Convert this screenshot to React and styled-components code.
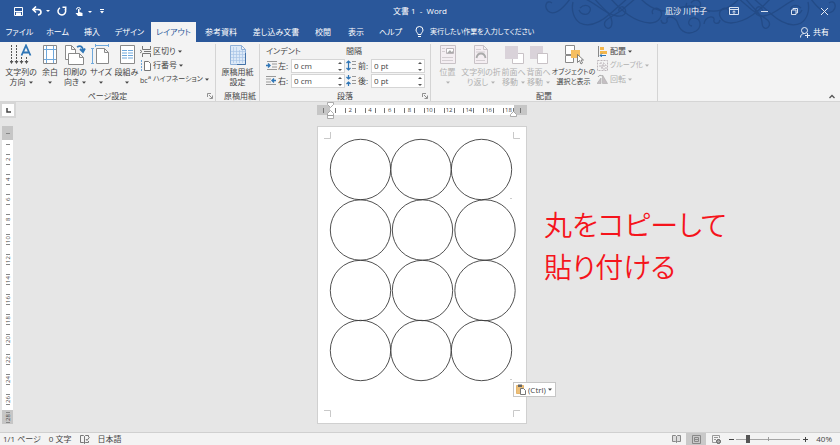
import React from "react";
import styled, { createGlobalStyle } from "styled-components";

const GlobalStyle = createGlobalStyle`
  * { box-sizing: border-box; }
  html, body { margin: 0; padding: 0; }
  body, button, input {
    font-family: "Open Sans", "Noto Sans CJK JP", sans-serif;
    font-size: 8px;
    line-height: 10px;
    font-feature-settings: "palt";
    color: #444;
  }
  button { border: 0; background: none; padding: 0; cursor: pointer; white-space: nowrap; }
`;

const Window = styled.div`
  display: flex;
  flex-direction: column;
  min-height: 100vh;
  background: #e6e6e6;
`;

/* ---------- header ---------- */
const Header = styled.header`
  position: relative;
  background: #2a579a;
  overflow: hidden;
`;
const Flourish = styled.svg`
  position: absolute;
  top: 0;
  right: 0;
  width: 300px;
  height: 42px;
  fill: none;
  stroke: #234b87;
  stroke-width: 1.3;
`;
const TitleBar = styled.div`
  position: relative;
  display: grid;
  grid-template-columns: 1fr auto 1fr;
  align-items: center;
  height: 22px;
`;
const QuickAccess = styled.div`
  display: flex;
  align-items: center;
  padding-left: 8px;
`;
const TitleButton = styled.button`
  display: flex;
  align-items: center;
  justify-content: center;
  width: ${(p) => p.$w}px;
  height: 20px;
  color: #fff;
`;
const Title = styled.h1`
  margin: 0;
  font-size: 8px;
  font-weight: 400;
  color: #fff;
  white-space: pre;
`;
const WindowControls = styled.div`
  display: flex;
  align-items: center;
  justify-content: flex-end;
  padding-right: 1px;
`;
const UserName = styled.span`
  color: #fff;
  margin-right: 12px;
`;
const TabBar = styled.nav`
  position: relative;
  display: flex;
  height: 20px;
`;
const Tab = styled.button`
  width: ${(p) => p.$w}px;
  height: 20px;
  color: ${(p) => (p.$active ? "#2a579a" : "#fff")};
  background: ${(p) => (p.$active ? "#f3f3f3" : "transparent")};
`;
const TellMe = styled.button`
  display: flex;
  align-items: center;
  gap: 6px;
  margin-left: 6px;
  font-size: 7px;
  color: #fff;
`;
const Share = styled.button`
  display: flex;
  align-items: center;
  gap: 3px;
  margin-left: auto;
  margin-right: 11px;
  color: #fff;
`;

/* ---------- ribbon ---------- */
const Ribbon = styled.section`
  display: flex;
  height: 60px;
  background: #f3f3f3;
  border-bottom: 1px solid #d5d5d5;
`;
const Group = styled.div`
  display: flex;
  flex: none;
  flex-direction: column;
  width: ${(p) => p.$w}px;
  margin-top: 2px;
  border-right: 1px solid #d4d4d4;
`;
const GroupBody = styled.div`
  display: flex;
  flex: 1;
  padding-left: ${(p) => p.$pad || 0}px;
`;
const GroupFooter = styled.div`
  display: grid;
  grid-template-columns: 8px 1fr 8px;
  align-items: center;
  height: 10px;
  text-align: center;
  white-space: nowrap;
`;
const Launcher = styled.button`
  display: flex;
  color: #777;
`;
const BigButton = styled.button`
  display: flex;
  flex: none;
  flex-direction: column;
  align-items: center;
  width: ${(p) => p.$w}px;
  height: 44px;
  font-size: ${(p) => (p.$compact ? 7 : 8)}px;
  color: ${(p) => (p.disabled ? "#b1b1b1" : "#444")};
`;
const BigIcon = styled.svg`
  width: 22px;
  height: 22px;
  flex: none;
  margin-bottom: 1px;
  fill: none;
  stroke: #8a8a8a;
`;
const ButtonLine = styled.span`
  display: flex;
  align-items: center;
  justify-content: center;
  gap: 3px;
  height: 10px;
`;
const SmallColumn = styled.div`
  display: flex;
  flex-direction: column;
  padding-left: 1px;
`;
const SmallButton = styled.button`
  display: flex;
  align-items: center;
  gap: 2px;
  height: 14px;
  font-size: ${(p) => (p.$compact ? 7 : 8)}px;
  color: ${(p) => (p.disabled ? "#b1b1b1" : "#444")};
`;
const SmallIcon = styled.svg`
  width: 11px;
  height: 11px;
  flex: none;
  fill: none;
  stroke: #777;
`;
const HyphenMark = styled.span`
  display: flex;
  align-items: flex-end;
  width: 11px;
  height: 11px;
  font-size: 7px;
  line-height: 8px;
`;
const Superscript = styled.span`
  align-self: flex-start;
  font-size: 6px;
  line-height: 6px;
`;
const Fields = styled.div`
  display: grid;
  grid-template-columns: 80px 80px;
  grid-template-rows: 14px 15px 15px;
  align-items: center;
`;
const Field = styled.label`
  display: grid;
  grid-template-columns: 12px 13px 54px;
  align-items: center;
  white-space: nowrap;
`;
const FieldBox = styled.span`
  display: flex;
  align-items: center;
  height: 14px;
  border: 1px solid #d5d5d5;
  background: #fff;
`;
const FieldInput = styled.input`
  flex: 1;
  min-width: 0;
  height: 12px;
  padding: 0 2px;
  border: 0;
  background: none;
  outline: 0;
`;
const Spinner = styled.svg`
  width: 8px;
  height: 12px;
  fill: #555;
`;
const CollapseButton = styled.button`
  align-self: flex-end;
  display: flex;
  margin: 0 5px 2px auto;
`;

/* ---------- workspace ---------- */
const Workspace = styled.main`
  flex: 1;
  display: grid;
  grid-template-columns: minmax(0, 317fr) 210px minmax(0, 313fr);
`;
const LeftPane = styled.div`
  display: flex;
  flex-direction: column;
  align-items: flex-start;
`;
const TabSelector = styled.button`
  display: flex;
  align-items: center;
  justify-content: center;
  width: 16px;
  height: 16px;
  margin-bottom: 8px;
  border: 2px solid #d6d6d6;
  background: #fdfdfd;
`;
const VerticalRuler = styled.div`
  display: flex;
  flex-direction: column;
  width: 11px;
  height: 298px;
  margin-left: 2px;
  background: #fff;
`;
const VerticalEnd = styled.div`
  display: flex;
  align-items: center;
  justify-content: center;
  height: 14px;
  background: #c6c6c6;
`;
const VerticalScale = styled.div`
  flex: 1;
  display: flex;
  flex-direction: column;
  justify-content: space-between;
  align-items: center;
  padding: 4px 0 5px;
`;
const VerticalTick = styled.span`
  width: 4px;
  height: 1px;
  background: #888;
`;
const VerticalMark = styled.span`
  display: flex;
  align-items: center;
  justify-content: center;
  width: 4px;
  height: 11px;
  border: solid #888;
  border-width: 1px 0;
  font-size: 6px;
  line-height: 6px;
  writing-mode: vertical-rl;
  transform: rotate(180deg);
`;
const DocumentPane = styled.div`
  display: flex;
  flex-direction: column;
`;
const RulerRow = styled.div`
  position: relative;
  display: flex;
  height: 10px;
  margin: 3px 0 11px;
  background: #fff;
`;
const RulerEnd = styled.div`
  display: flex;
  align-items: center;
  justify-content: center;
  width: 13px;
  background: #c6c6c6;
`;
const RulerScale = styled.div`
  flex: 1;
  display: flex;
  justify-content: space-between;
  align-items: center;
  padding-left: 5px;
`;
const RulerTick = styled.span`
  width: 1px;
  height: 5px;
  background: #777;
`;
const RulerMark = styled.span`
  display: flex;
  align-items: center;
  justify-content: center;
  width: 11px;
  height: 5px;
  border: solid #777;
  border-width: 0 1px;
  font-size: 6px;
  line-height: 6px;
`;
const IndentMarker = styled.svg`
  position: absolute;
  top: -3px;
  ${(p) => (p.$end ? "right: 10px;" : "left: 10px;")}
  width: 7px;
  height: 17px;
  fill: #fff;
  stroke: #999;
  stroke-width: 0.8;
`;
const Page = styled.article`
  position: relative;
  width: 210px;
  height: 298px;
  background: #fff;
  border: 1px solid #d0d0d0;
`;
const Drawing = styled.svg`
  display: block;
  width: 208px;
  height: 296px;
  fill: none;
`;
const PasteOptions = styled.button`
  position: absolute;
  left: 195px;
  top: 255px;
  display: flex;
  align-items: center;
  gap: 2px;
  width: 43px;
  height: 15px;
  padding-left: 2px;
  border: 1px solid #c6c6c6;
  background: #fff;
`;
const Annotation = styled.p`
  margin: 101px 0 0 17px;
  font-family: "Noto Sans CJK JP", sans-serif;
  font-size: 28px;
  font-weight: 350;
  line-height: 42px;
  color: #f5141c;
  white-space: nowrap;
`;

/* ---------- status bar ---------- */
const StatusBar = styled.footer`
  display: flex;
  align-items: center;
  height: 13px;
  padding: 0 8px 0 3px;
  background: #f3f3f3;
  border-top: 1px solid #d0d0d0;
`;
const StatusItem = styled.button`
  display: flex;
  align-items: center;
  margin-right: 8px;
`;
const ViewButton = styled.button`
  display: flex;
  align-items: center;
  justify-content: center;
  width: 20px;
  height: 12px;
  background: ${(p) => (p.$active ? "#c9c9c9" : "transparent")};
`;
const Push = styled.span`
  flex: 1;
`;
const ZoomStep = styled.button`
  display: flex;
  align-items: center;
  justify-content: center;
  width: 10px;
  height: 12px;
`;
const ZoomSlider = styled.input`
  appearance: none;
  width: 64px;
  height: 12px;
  margin: 0;
  background:
    linear-gradient(#999, #999) center / 1px 4px no-repeat,
    linear-gradient(#a6a6a6, #a6a6a6) center / 100% 1px no-repeat;
  &::-webkit-slider-thumb {
    appearance: none;
    width: 4px;
    height: 8px;
    background: #555;
  }
`;
const ZoomValue = styled.output`
  width: 22px;
  text-align: right;
`;

const Caret = () => (
  <svg width="4" height="3" viewBox="0 0 4 3" aria-hidden="true">
    <path d="M0 0.5h4L2 2.7z" fill="currentColor" />
  </svg>
);

const FlourishArt = () => (
  <Flourish viewBox="0 0 300 42" aria-hidden="true">
    <path d="M12 3C6-1 4 7 8 11c6 5 14-1 22-12M33 2c-2 9 1 17 7 21 10 5 21-1 31-10L88-2" />
    <path d="M40 8c5-5 12-2 10 3s-9 4-11-1M43-2c14 5 22 17 34 18 7 1 10-3 8-7s-7-2-6 2" />
    <path d="M54-2c9 12 17 14 18 24 0 7-5 8-7 4-3-6 7-9 17-16L96-2" />
    <path d="M70-2c12 13 24 24 40 25 9 0 14-8 10-13-4-4-10 0-7 4" />
    <path d="M121 20c1 5 7 4 6 0-1-5 9-4 11 4 3 9 11 11 18 7 6-4 5-12-1-13s-9 7-3 8M132 12c10-8 28-8 38 0M151 3c5-7 14 0 7 6-5 5-15-1-11-6M180 20c-1 5-7 4-6 0 1-5-9-4-10 4" />
    <path d="M289 3c6-4 8 4 4 8-6 5-14-1-22-12M268 2c2 9-1 17-7 21-10 5-21-1-31-10L213-2" />
    <path d="M261 8c-5-5-12-2-10 3s9 4 11-1M258-2c-14 5-22 17-34 18-7 1-10-3-8-7s7-2 6 2" />
    <path d="M205-2c9 12 16 14 17 24 0 7 5 8 7 4 3-6-7-9-17-16L198-2M231-2c-12 13-24 24-40 25-9 0-14-8-10-13 4-4 10 0 7 4" />
    <path d="M100-2c11 12 26 17 40 10M200-2c-11 12-26 17-40 10" />
  </Flourish>
);

const SheetPath = ({ x = 0, y = 0, w = 12, h = 15, stroke = "#8a8a8a", fill = "#fff" }) => (
  <path
    d={`M${x + 0.5} ${y + 0.5}h${w - 4}l4 4v${h - 4}h-${w}zM${x + w - 3.5} ${y + 0.5}v4h4`}
    fill={fill}
    stroke={stroke}
  />
);

const icons = {
  direction: (
    <>
      <path d="M1.5 1v17M6.5 1v17M11.5 13v5M16.5 13v5" stroke="#555" strokeDasharray="2 1" />
      <path d="M-0.5 17h4l-2 3zM4.5 17h4l-2 3zM9.5 17h4l-2 3zM14.5 17h4l-2 3z" fill="#555" stroke="none" />
      <path d="M11.5 11.5L16 1.5l4.5 10M13 8.5h6" stroke="#2e75b6" strokeWidth="1.8" />
    </>
  ),
  margins: (
    <>
      <path d="M4.5 1.5h13v18h-13z" fill="#fff" />
      <path d="M7.5 2v17M14.5 2v17M5 5.5h12M5 15.5h12" stroke="#6fa8dc" />
    </>
  ),
  orientation: (
    <>
      <SheetPath x={1} y={1} w={10} h={14} />
      <SheetPath x={4} y={9} w={15} h={11} />
      <path d="M13 3c4-2 6 0 6 4M16 5l3 3 2-3.5" stroke="#2e75b6" strokeWidth="1.8" />
    </>
  ),
  size: (
    <>
      <SheetPath x={6} y={4} w={12} h={15} />
      <path d="M5 1.5h14M5.5 0v3M18.5 0v3M2.5 4v16M1 4.5h3M1 19.5h3" stroke="#6fa8dc" />
    </>
  ),
  columns: (
    <>
      <path d="M4.5 1.5h14v18h-14z" fill="#fff" />
      <path d="M6 6.5h5M12 6.5h5M6 9h5M12 9h5M6 11.5h5M12 11.5h5M6 14h5M12 14h5" stroke="#6fa8dc" />
    </>
  ),
  manuscript: (
    <>
      <SheetPath x={3} y={1} w={15} h={19} stroke="#8fb0d8" fill="#dce9f7" />
      <path d="M6.5 3v16M9.5 3v16M12.5 6v13M15.5 6v13M4 7.5h14M4 10.5h14M4 13.500h14M4 16.500h14" stroke="#a9c5e6" strokeWidth="0.7" />
      <path d="M10 20.500h8.500V9" stroke="#4472a8" />
    </>
  ),
  position: (
    <>
      <path d="M3.5 1.5h15v18h-15z" fill="#f4eef2" stroke="#c8c2c6" />
      <path d="M5 4.5h3M5 7.5h3M5 13.5h11M5 16.5h11" stroke="#d4ced2" />
      <path d="M9.5 4.5h7v5h-7z" fill="#fff" stroke="#bbb5b9" />
      <path d="M10 9l3-3 1.500 2 1-1 1 2z" fill="#aaa" stroke="none" />
    </>
  ),
  wrap: (
    <>
      <SheetPath x={4} y={1} w={13} h={18} stroke="#c8c2c6" fill="#f4eef2" />
      <path d="M6 5.5h5M6 8h9M6 16.5h9" stroke="#d4ced2" />
      <path d="M6.5 14c1-6 8-6 9 0" stroke="#aaa" strokeWidth="1.8" />
    </>
  ),
  forward: (
    <>
      <path d="M9.5 9.5h11v10h-11z" fill="#fff" stroke="#c8c2c6" />
      <path d="M2 2h13v13H2z" fill="#d9d2d9" stroke="none" />
    </>
  ),
  backward: (
    <>
      <path d="M2 2h13v13H2z" fill="#d9d2d9" stroke="none" />
      <path d="M9.5 9.5h10v10h-10z" fill="#fff" stroke="#c8c2c6" />
    </>
  ),
  select: (
    <>
      <path d="M2.5 1.5h9v9h-9zM2.5 11.5h8v7h-8z" fill="#fff" />
      <path d="M8 6h9v8H8z" fill="#f6bf62" stroke="none" />
      <path d="M14.5 10.5v8l2-2 1.500 3.500 1.500-1-1.500-3h2.500z" fill="#fff" stroke="#666" strokeWidth="0.8" />
    </>
  ),
};

const smallIcons = {
  breaks: <path d="M2.5 0v3.5h8V0M2.5 11V7.5h8V11M0 4l2 1.5L0 7M4 5.5h7" />,
  lines: (
    <>
      <path d="M1.5 0v11" stroke="#6fa8dc" strokeDasharray="2 1" />
      <path d="M4.5 1.5h4l2 2v7h-6z" fill="#fff" />
    </>
  ),
  align: (
    <>
      <path d="M1.5 0v11" stroke="#888" />
      <path d="M3 1h4v3H3zM3 5h7v3H3z" fill="#f3b64b" stroke="none" />
      <path d="M9 9.500H3M5 7.500l-2 2 2 1.500" stroke="#2e75b6" />
    </>
  ),
  group: (
    <path d="M0.5 0.5h10v10h-10zM3 3h4v4H3zM5 5h4v4H5z" stroke="#bdb6bb" strokeDasharray="2 1" />
  ),
  rotate: (
    <>
      <path d="M5.5 1v8.5h5zM4 4v5.500H0z" fill="#c5bfc3" stroke="#aaa" strokeWidth="0.6" />
      <path d="M1 3c1-2 3-2 4-1" stroke="#aaa" />
    </>
  ),
  left: (
    <>
      <path d="M1 1.5h10M6 4h5M6 7h5M1 9.5h10" stroke="#999" />
      <path d="M0 5.5h4M2 3.5l2 2-2 2" stroke="#2e75b6" strokeWidth="1.4" />
    </>
  ),
  right: (
    <>
      <path d="M0 1.5h10M0 4h5M0 7h5M0 9.5h10" stroke="#999" />
      <path d="M10 5.5H6M8 3.5l-2 2 2 2" stroke="#2e75b6" strokeWidth="1.4" />
    </>
  ),
  before: (
    <>
      <path d="M6 1.5h4M6 4.5h4M6 8.5h4" stroke="#999" />
      <path d="M2.5 1v9M0.5 3l2-2 2 2M0.5 8l2 2 2-2" stroke="#2e75b6" strokeWidth="1.2" />
    </>
  ),
  after: (
    <>
      <path d="M6 1.5h4M6 5.5h4M6 8.5h4" stroke="#999" />
      <path d="M2.5 0v4M0.5 2l2 2 2-2M2.5 11V7M0.5 9l2-2 2 2" stroke="#2e75b6" strokeWidth="1.2" />
    </>
  ),
};

const Big = ({ icon, w, lines, caret, disabled, compact }) => (
  <BigButton $w={w} $compact={compact} disabled={disabled}>
    <BigIcon viewBox="0 0 22 22" aria-hidden="true">{icons[icon]}</BigIcon>
    {lines.map((line, i) => (
      <ButtonLine key={i}>
        {line}
        {caret && i === lines.length - 1 && <Caret />}
      </ButtonLine>
    ))}
  </BigButton>
);

const Small = ({ icon, label, disabled, compact }) => (
  <SmallButton disabled={disabled} $compact={compact}>
    {icon === "hyphen" ? (
      <HyphenMark aria-hidden="true">bc<Superscript>a</Superscript></HyphenMark>
    ) : (
      <SmallIcon viewBox="0 0 11 11" aria-hidden="true">{smallIcons[icon]}</SmallIcon>
    )}
    {label}
    <Caret />
  </SmallButton>
);

const Footer = ({ label, launcher }) => (
  <GroupFooter>
    <span />
    <span>{label}</span>
    {launcher && (
      <Launcher aria-label={`${label}の詳細`}>
        <svg width="6" height="6" viewBox="0 0 6 6" fill="none" stroke="currentColor" strokeWidth="0.8">
          <path d="M0.5 4V0.5H4M2 2l3 3M5.5 2.5v3h-3" />
        </svg>
      </Launcher>
    )}
  </GroupFooter>
);

const Spin = ({ icon, label, value }) => (
  <Field>
    <SmallIcon viewBox="0 0 11 11" aria-hidden="true">{smallIcons[icon]}</SmallIcon>
    <span>{label}</span>
    <FieldBox>
      <FieldInput defaultValue={value} />
      <Spinner viewBox="0 0 8 12" aria-hidden="true">
        <path d="M2 4l2-2 2 2zM2 9l2 2 2-2z" />
      </Spinner>
    </FieldBox>
  </Field>
);

const tabs = [
  ["ファイル", 39], ["ホーム", 37], ["挿入", 32], ["デザイン", 43], ["レイアウト", 45],
  ["参考資料", 50], ["差し込み文書", 60], ["校閲", 34], ["表示", 32], ["ヘルプ", 37],
];

const circles = [
  [42, 42], [102.5, 42], [163, 42],
  [42, 102.5], [104, 102.5], [166.5, 102.5],
  [42, 163], [104, 163], [166.5, 163],
  [42, 223], [102.5, 223], [163, 223],
];

const range = (from, to) =>
  Array.from({ length: (to - from) / 2 + 1 }, (_, i) => from + i * 2);

export default function App() {
  return (
    <Window>
      <GlobalStyle />
      <Header>
        <FlourishArt />
        <TitleBar>
          <QuickAccess>
            <TitleButton $w={20} aria-label="上書き保存">
              <svg width="9" height="9" viewBox="0 0 9 9" fill="none" stroke="#fff">
                <path d="M0.5 0.5h8v8h-8z" />
                <path d="M2 5.5h5V8H2z" fill="#fff" stroke="none" />
                <path d="M1 4.5h7" />
              </svg>
            </TitleButton>
            <TitleButton $w={26} aria-label="元に戻す">
              <svg width="18" height="10" viewBox="0 0 18 10" fill="none" stroke="#fff" strokeWidth="1.6">
                <path d="M4 0.5L1 3.5l3 3M1.5 3.5H6c4 0 4 5 0 5.5" />
                <path d="M14 4h4l-2 2z" fill="#fff" stroke="none" />
              </svg>
            </TitleButton>
            <TitleButton $w={16} aria-label="やり直し">
              <svg width="10" height="10" viewBox="0 0 10 10" fill="none" stroke="#fff" strokeWidth="1.5">
                <path d="M3 1.8a3.8 3.8 0 1 0 5 1.2M5.5 1.2h3.200v3" />
              </svg>
            </TitleButton>
            <TitleButton $w={28} aria-label="タッチ/マウス モードの切り替え">
              <svg width="18" height="11" viewBox="0 0 18 11" fill="none" stroke="#fff">
                <path d="M1.5 3.5a2 2 0 1 1 4 0" />
                <path d="M3 3h1.500v3l3 1v3H3L0.500 7H3z" fill="#fff" stroke="none" />
                <path d="M13 5h4l-2 2z" fill="#fff" stroke="none" />
              </svg>
            </TitleButton>
            <TitleButton $w={8} aria-label="クイック アクセスのカスタマイズ">
              <svg width="4" height="5" viewBox="0 0 4 5" fill="#fff">
                <path d="M0 0h4v1H0zM0 2h4L2 4.5z" />
              </svg>
            </TitleButton>
          </QuickAccess>
          <Title>文書 1  -  Word</Title>
          <WindowControls>
            <UserName>凪沙 川中子</UserName>
            <TitleButton $w={30} aria-label="リボンの表示オプション">
              <svg width="10" height="8" viewBox="0 0 10 8" fill="none" stroke="#d9e2f0">
                <path d="M0.5 0.5h9v7h-9zM1 2.5h8M5 7V4M3.5 5L5 3.8 6.5 5" />
              </svg>
            </TitleButton>
            <TitleButton $w={30} aria-label="最小化">
              <svg width="7" height="7" viewBox="0 0 7 7" stroke="#d9e2f0"><path d="M0 3.5h7" /></svg>
            </TitleButton>
            <TitleButton $w={30} aria-label="元に戻す (縮小)">
              <svg width="7" height="7" viewBox="0 0 7 7" fill="none" stroke="#d9e2f0">
                <path d="M0.5 2h4.5v4.5H0.5zM2 2V0.5h4.5V5H5" />
              </svg>
            </TitleButton>
            <TitleButton $w={30} aria-label="閉じる">
              <svg width="7" height="7" viewBox="0 0 7 7" stroke="#e6ecf5"><path d="M0 0l7 7M7 0L0 7" /></svg>
            </TitleButton>
          </WindowControls>
        </TitleBar>
        <TabBar>
          {tabs.map(([label, w]) => (
            <Tab key={label} $w={w} $active={label === "レイアウト"}>{label}</Tab>
          ))}
          <TellMe>
            <svg width="9" height="12" viewBox="0 0 9 12" fill="none" stroke="#fff">
              <path d="M3 8.5C3 7 1 6 1 4a3.5 3.5 0 0 1 7 0c0 2-2 3-2 4.5zM3 10.5h3" />
            </svg>
            実行したい作業を入力してください
          </TellMe>
          <Share>
            <svg width="10" height="11" viewBox="0 0 10 11" fill="none" stroke="#e6ecf5">
              <circle cx="4.5" cy="3.5" r="3" />
              <path d="M0.5 10.5C0.5 8 2 6.5 4.5 6.5M5 8.5h5M7.5 6v5" />
            </svg>
            共有
          </Share>
        </TabBar>
      </Header>

      <Ribbon>
        <Group $w={216}>
          <GroupBody $pad={4}>
            <Big icon="direction" w={34} lines={["文字列の", "方向"]} caret />
            <Big icon="margins" w={24} lines={["余白", ""]} caret />
            <Big icon="orientation" w={26} lines={["印刷の", "向き"]} caret />
            <Big icon="size" w={26} lines={["サイズ", ""]} caret />
            <Big icon="columns" w={25} lines={["段組み", ""]} caret />
            <SmallColumn>
              <Small icon="breaks" label="区切り" />
              <Small icon="lines" label="行番号" />
              <Small icon="hyphen" label="ハイフネーション" compact />
            </SmallColumn>
          </GroupBody>
          <Footer label="ページ設定" launcher />
        </Group>
        <Group $w={44}>
          <GroupBody>
            <Big icon="manuscript" w={43} lines={["原稿用紙", "設定"]} />
          </GroupBody>
          <Footer label="原稿用紙" />
        </Group>
        <Group $w={171}>
          <GroupBody $pad={6}>
            <Fields>
              <span>インデント</span>
              <span>間隔</span>
              <Spin icon="left" label="左:" value="0 cm" />
              <Spin icon="before" label="前:" value="0 pt" />
              <Spin icon="right" label="右:" value="0 cm" />
              <Spin icon="after" label="後:" value="0 pt" />
            </Fields>
          </GroupBody>
          <Footer label="段落" launcher />
        </Group>
        <Group $w={227}>
          <GroupBody $pad={3}>
            <Big icon="position" w={27} lines={["位置", ""]} caret disabled />
            <Big icon="wrap" w={40} lines={["文字列の折", "り返し"]} caret disabled />
            <Big icon="forward" w={25} lines={["前面へ", "移動"]} caret disabled />
            <Big icon="backward" w={25} lines={["背面へ", "移動"]} caret disabled />
            <Big icon="select" w={45} lines={["オブジェクトの", "選択と表示"]} compact />
            <SmallColumn>
              <Small icon="align" label="配置" />
              <Small icon="group" label="グループ化" compact disabled />
              <Small icon="rotate" label="回転" disabled />
            </SmallColumn>
          </GroupBody>
          <Footer label="配置" />
        </Group>
        <CollapseButton aria-label="リボンを折りたたむ">
          <svg width="6" height="5" viewBox="0 0 6 5" fill="none" stroke="#555" strokeWidth="1.3">
            <path d="M0.5 4L3 1.5 5.5 4" />
          </svg>
        </CollapseButton>
      </Ribbon>

      <Workspace>
        <LeftPane>
          <TabSelector aria-label="タブの種類">
            <svg width="5" height="5" viewBox="0 0 5 5" fill="none" stroke="#444" strokeWidth="1.5">
              <path d="M1 0v4h4" />
            </svg>
          </TabSelector>
          <VerticalRuler>
            <VerticalEnd><VerticalTick /></VerticalEnd>
            <VerticalScale>
              <VerticalTick />
              {range(2, 26).map((n) => <VerticalMark key={n}>{n}</VerticalMark>)}
            </VerticalScale>
            <VerticalEnd><VerticalMark>28</VerticalMark></VerticalEnd>
          </VerticalRuler>
        </LeftPane>
        <DocumentPane>
          <RulerRow>
            <RulerEnd><RulerTick /></RulerEnd>
            <RulerScale>
              <RulerTick />
              {range(2, 18).map((n) => <RulerMark key={n}>{n}</RulerMark>)}
            </RulerScale>
            <RulerEnd><RulerTick /></RulerEnd>
            <IndentMarker viewBox="0 0 7 17" aria-hidden="true">
              <path d="M0.5 0.5h6v2l-3 3-3-3zM3.5 8.5l3 3v2h-6v-2zM0.5 13.5h6v3h-6z" />
            </IndentMarker>
            <IndentMarker $end viewBox="0 0 7 17" aria-hidden="true">
              <path d="M3.5 9.5l3 3v2h-6v-2z" />
            </IndentMarker>
          </RulerRow>
          <Page>
            <Drawing viewBox="0 0 208 296" role="img" aria-label="円 12 個">
              <path
                d="M6 11.5h6.5V5M202 11.5h-6.5V5M6 283.5h6.5v6.5M202 283.5h-6.5v6.5"
                stroke="#c9c9c9"
              />
              {circles.map(([x, y], i) => (
                <circle key={i} cx={x + 0.5} cy={y + 0.5} r="30.2" stroke="#3c3c3c" strokeWidth="0.9" />
              ))}
              <path d="M192 71.5h2M192 252.5h2" stroke="#ccc" />
            </Drawing>
            <PasteOptions>
              <svg width="10" height="11" viewBox="0 0 10 11" fill="none">
                <path d="M0.5 1.5h7v8h-7z" fill="#edc07a" stroke="#e5b56c" />
                <path d="M2 0.5h4V3H2z" fill="#666" />
                <path d="M4.5 4.5h3l2 2v4h-5z" fill="#fff" stroke="#777" />
              </svg>
              (Ctrl)
              <Caret />
            </PasteOptions>
          </Page>
        </DocumentPane>
        <Annotation>
          丸をコピーして
          <br />
          貼り付ける
        </Annotation>
      </Workspace>

      <StatusBar>
        <StatusItem>1/1 ページ</StatusItem>
        <StatusItem>0 文字</StatusItem>
        <StatusItem aria-label="文章校正">
          <svg width="10" height="9" viewBox="0 0 10 9" fill="none" stroke="#777">
            <path d="M4.5 8.5l-1-1h-3v-7h3l1 1 1-1h3V2M4.5 1.5v7l1-1h3V6M6 4l1 1.500L9.500 2" />
          </svg>
        </StatusItem>
        <StatusItem>日本語</StatusItem>
        <Push />
        <ViewButton aria-label="閲覧モード">
          <svg width="9" height="8" viewBox="0 0 9 8" fill="#ddd" stroke="#888">
            <path d="M0.5 0.5h3l1 1 1-1h3v6h-3l-1 1-1-1h-3zM4.5 1.5v6" />
          </svg>
        </ViewButton>
        <ViewButton $active aria-label="印刷レイアウト">
          <svg width="9" height="9" viewBox="0 0 9 9" fill="none" stroke="#888">
            <path d="M0.5 0.5h8v8h-8zM2.5 2.5h4v4h-4zM3 4.5h3" />
          </svg>
        </ViewButton>
        <ViewButton aria-label="Web レイアウト">
          <svg width="9" height="9" viewBox="0 0 9 9" fill="none" stroke="#999">
            <path d="M4 7.5H0.5v-7h7V3M2 2.5h4M2 4.5h2" />
            <circle cx="6.5" cy="6.5" r="2" fill="#aaa" stroke="#555" />
          </svg>
        </ViewButton>
        <ZoomStep aria-label="縮小">
          <svg width="5" height="5" viewBox="0 0 5 5" stroke="#444"><path d="M0 2.5h5" /></svg>
        </ZoomStep>
        <ZoomSlider type="range" min="0" max="100" defaultValue="16" aria-label="ズーム" />
        <ZoomStep aria-label="拡大">
          <svg width="5" height="5" viewBox="0 0 5 5" stroke="#444"><path d="M0 2.5h5M2.5 0v5" /></svg>
        </ZoomStep>
        <ZoomValue>40%</ZoomValue>
      </StatusBar>
    </Window>
  );
}
